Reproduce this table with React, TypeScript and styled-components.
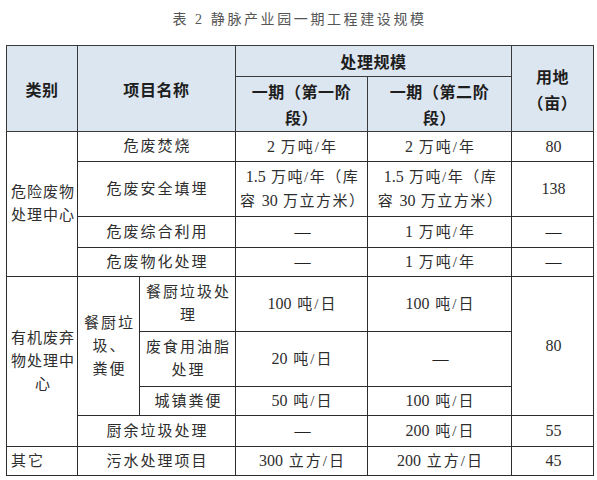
import React from "react";
import styled, { createGlobalStyle } from "styled-components";

const Global = createGlobalStyle`
  html, body { margin: 0; padding: 0; background: #ffffff; }
  body { font-family: "Liberation Serif", "Noto Sans CJK SC", serif; }
`;

const Page = styled.div`
  width: 597px;
  height: 480px;
  padding: 10px 0 0 6px;
  box-sizing: border-box;
  background: #fff;
`;

const Title = styled.div`
  width: 587px;
  text-align: center;
  font-family: "Liberation Serif", "Noto Sans CJK SC", serif;
  font-size: 14px;
  line-height: 20px;
  letter-spacing: 2.6px;
  color: #555;
  margin-bottom: 15px;
`;

const Table = styled.table`
  border-collapse: collapse;
  table-layout: fixed;
  width: 587px;
  border: 1px solid #2c2c2c;
`;

const Row = styled.tr<{ $h: number }>`
  height: ${(p) => p.$h}px;
`;

const Head = styled.th`
  background: #dce6f1;
  border: 1px solid #3a3a3a;
  font-family: "Noto Sans CJK SC", sans-serif;
  font-weight: 700;
  font-size: 16px;
  line-height: 26px;
  letter-spacing: 0.6px;
  color: #1e1e1e;
  text-align: center;
  vertical-align: middle;
  padding: 0 2px;
  white-space: nowrap;
`;

const Cell = styled.td<{ $align?: string; $ls?: number }>`
  border: 1px solid #2c2c2c;
  font-family: "Liberation Serif", "Noto Sans CJK SC", serif;
  font-size: 15px;
  line-height: 23px;
  letter-spacing: ${(p) => (p.$ls ?? 2)}px;
  color: #2e2e2e;
  text-align: ${(p) => p.$align ?? "center"};
  vertical-align: middle;
  padding: 0 2px 0 4px;
  white-space: nowrap;
  overflow: hidden;
`;

const Num = styled.span`
  font-family: "Liberation Serif", serif;
  font-size: 16px;
  letter-spacing: 0;
`;

const Dash = styled.span`
  font-family: "Liberation Serif", serif;
  font-size: 16px;
  letter-spacing: 0;
  color: #222;
`;

export default function App() {
  return (
    <>
      <Global />
      <Page>
        <Title>表 2 静脉产业园一期工程建设规模</Title>
        <Table>
          <colgroup>
            <col style={{ width: 71 }} />
            <col style={{ width: 62 }} />
            <col style={{ width: 96 }} />
            <col style={{ width: 132 }} />
            <col style={{ width: 144 }} />
            <col style={{ width: 82 }} />
          </colgroup>
          <tbody>
            <Row $h={31}>
              <Head rowSpan={2}>类别</Head>
              <Head rowSpan={2} colSpan={2}>项目名称</Head>
              <Head colSpan={2}>处理规模</Head>
              <Head rowSpan={2}>
                用地
                <br />
                （亩）
              </Head>
            </Row>
            <Row $h={55}>
              <Head>
                一期（第一阶
                <br />
                段）
              </Head>
              <Head>
                一期（第二阶
                <br />
                段）
              </Head>
            </Row>
            <Row $h={30}>
              <Cell rowSpan={4} $ls={1}>
                危险废物
                <br />
                处理中心
              </Cell>
              <Cell colSpan={2}>危废焚烧</Cell>
              <Cell><Num>2</Num> 万吨/年</Cell>
              <Cell><Num>2</Num> 万吨/年</Cell>
              <Cell><Num>80</Num></Cell>
            </Row>
            <Row $h={55}>
              <Cell colSpan={2}>危废安全填埋</Cell>
              <Cell $ls={1.5}>
                <Num>1.5</Num> 万吨/年（库
                <br />
                容 <Num>30</Num> 万立方米）
              </Cell>
              <Cell $ls={1.5}>
                <Num>1.5</Num> 万吨/年（库
                <br />
                容 <Num>30</Num> 万立方米）
              </Cell>
              <Cell><Num>138</Num></Cell>
            </Row>
            <Row $h={31}>
              <Cell colSpan={2}>危废综合利用</Cell>
              <Cell><Dash>—</Dash></Cell>
              <Cell><Num>1</Num> 万吨/年</Cell>
              <Cell><Dash>—</Dash></Cell>
            </Row>
            <Row $h={29}>
              <Cell colSpan={2}>危废物化处理</Cell>
              <Cell><Dash>—</Dash></Cell>
              <Cell><Num>1</Num> 万吨/年</Cell>
              <Cell><Dash>—</Dash></Cell>
            </Row>
            <Row $h={55}>
              <Cell rowSpan={4} $ls={1}>
                有机废弃
                <br />
                物处理中
                <br />
                心
              </Cell>
              <Cell rowSpan={3}>
                餐厨垃
                <br />
                圾、
                <br />
                粪便
              </Cell>
              <Cell>
                餐厨垃圾处
                <br />
                理
              </Cell>
              <Cell><Num>100</Num> 吨/日</Cell>
              <Cell><Num>100</Num> 吨/日</Cell>
              <Cell rowSpan={3}><Num>80</Num></Cell>
            </Row>
            <Row $h={55}>
              <Cell>
                废食用油脂
                <br />
                处理
              </Cell>
              <Cell><Num>20</Num> 吨/日</Cell>
              <Cell><Dash>—</Dash></Cell>
            </Row>
            <Row $h={29}>
              <Cell>城镇粪便</Cell>
              <Cell><Num>50</Num> 吨/日</Cell>
              <Cell><Num>100</Num> 吨/日</Cell>
            </Row>
            <Row $h={31}>
              <Cell colSpan={2}>厨余垃圾处理</Cell>
              <Cell><Dash>—</Dash></Cell>
              <Cell><Num>200</Num> 吨/日</Cell>
              <Cell><Num>55</Num></Cell>
            </Row>
            <Row $h={29}>
              <Cell $align="left">其它</Cell>
              <Cell colSpan={2}>污水处理项目</Cell>
              <Cell><Num>300</Num> 立方/日</Cell>
              <Cell><Num>200</Num> 立方/日</Cell>
              <Cell><Num>45</Num></Cell>
            </Row>
          </tbody>
        </Table>
      </Page>
    </>
  );
}
